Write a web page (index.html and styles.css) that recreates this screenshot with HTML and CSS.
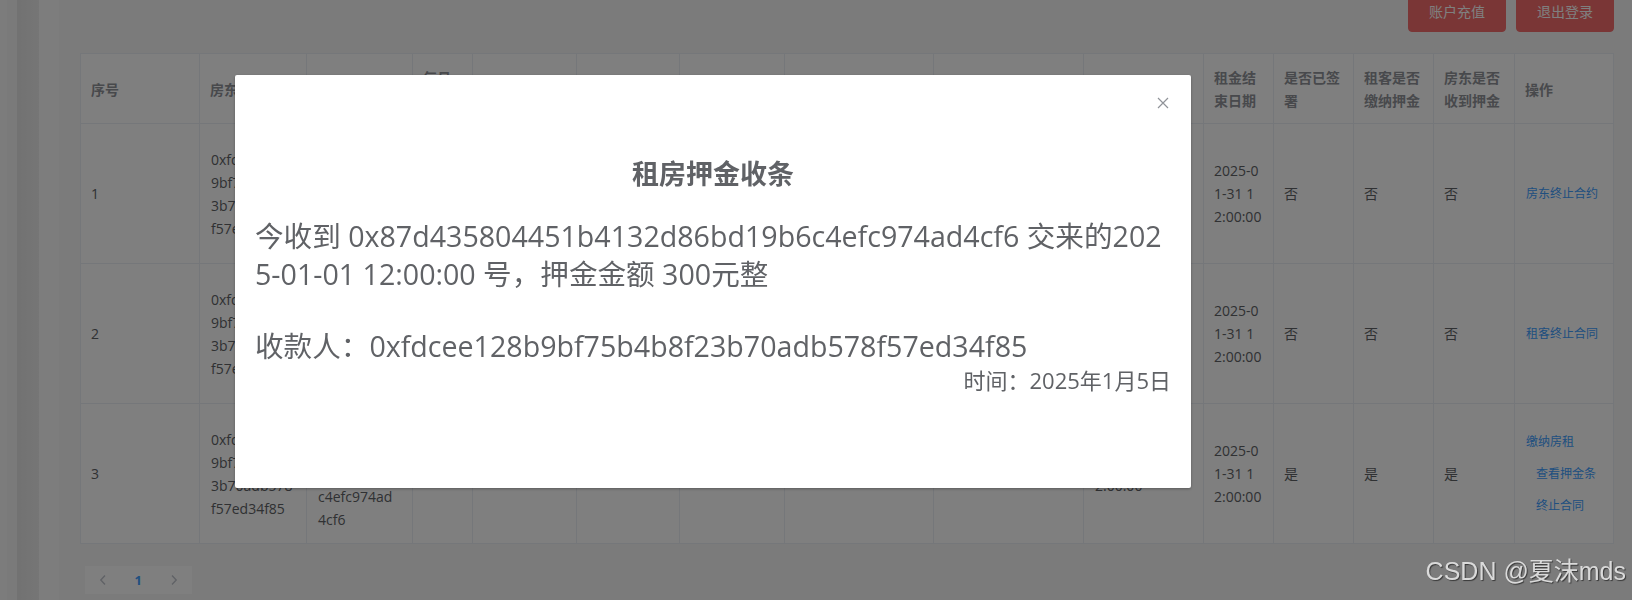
FILE: index.html
```html
<!DOCTYPE html>
<html lang="zh-CN">
<head>
  <meta charset="utf-8">
  <title>租房合约</title>
  <link rel="stylesheet" href="styles.css">
</head>
<body>
<div class="layout">
  <div class="rail">
    <span class="rail-a"></span>
    <span class="rail-b"></span>
    <span class="rail-c"></span>
    <span class="rail-d"></span>
  </div>

  <div class="main">
    <div class="toolbar">
      <button class="btn-danger">账户充值</button>
      <button class="btn-danger">退出登录</button>
    </div>

    <div class="table-wrap">
      <table class="grid">
        <colgroup>
          <col class="w119"><col class="w107"><col class="w106"><col class="w60">
          <col class="w104"><col class="w103"><col class="w105"><col class="w149">
          <col class="w150"><col class="w120"><col class="w70"><col class="w80">
          <col class="w80"><col class="w81"><col class="w99">
        </colgroup>
        <thead>
          <tr>
            <th><div class="cell">序号</div></th>
            <th><div class="cell">房东地址</div></th>
            <th><div class="cell">租客地址</div></th>
            <th><div class="cell">每月租金</div></th>
            <th><div class="cell">房屋名称</div></th>
            <th><div class="cell">房屋地址</div></th>
            <th><div class="cell">押金</div></th>
            <th><div class="cell">房屋描述</div></th>
            <th><div class="cell">签约时间</div></th>
            <th><div class="cell">租金开始日期</div></th>
            <th><div class="cell">租金结束日期</div></th>
            <th><div class="cell">是否已签署</div></th>
            <th><div class="cell">租客是否缴纳押金</div></th>
            <th><div class="cell">房东是否收到押金</div></th>
            <th><div class="cell">操作</div></th>
          </tr>
        </thead>
        <tbody>
          <tr>
            <td><div class="cell">1</div></td>
            <td><div class="cell addr">0xfdcee128b9bf75b4b8f23b70adb578f57ed34f85</div></td>
            <td><div class="cell addr tight">0x87d435804451b4132d86bd19b6c4efc974ad4cf6</div></td>
            <td></td><td></td><td></td><td></td><td></td><td></td>
            <td><div class="cell addr">2025-01-01 1<br>2:00:00</div></td>
            <td><div class="cell">2025-0<br>1-31 1<br>2:00:00</div></td>
            <td><div class="cell">否</div></td>
            <td><div class="cell">否</div></td>
            <td><div class="cell">否</div></td>
            <td><div class="cell"><button class="btn-text">房东终止合约</button></div></td>
          </tr>
          <tr>
            <td><div class="cell">2</div></td>
            <td><div class="cell addr">0xfdcee128b9bf75b4b8f23b70adb578f57ed34f85</div></td>
            <td><div class="cell addr tight">0x87d435804451b4132d86bd19b6c4efc974ad4cf6</div></td>
            <td></td><td></td><td></td><td></td><td></td><td></td>
            <td><div class="cell addr">2025-01-01 1<br>2:00:00</div></td>
            <td><div class="cell">2025-0<br>1-31 1<br>2:00:00</div></td>
            <td><div class="cell">否</div></td>
            <td><div class="cell">否</div></td>
            <td><div class="cell">否</div></td>
            <td><div class="cell"><button class="btn-text">租客终止合同</button></div></td>
          </tr>
          <tr>
            <td><div class="cell">3</div></td>
            <td><div class="cell addr">0xfdcee128b9bf75b4b8f23b70adb578f57ed34f85</div></td>
            <td><div class="cell addr tight">0x87d435804451b4132d86bd19b6c4efc974ad4cf6</div></td>
            <td></td><td></td><td></td><td></td><td></td><td></td>
            <td><div class="cell addr">2025-01-01 1<br>2:00:00</div></td>
            <td><div class="cell">2025-0<br>1-31 1<br>2:00:00</div></td>
            <td><div class="cell">是</div></td>
            <td><div class="cell">是</div></td>
            <td><div class="cell">是</div></td>
            <td><div class="cell"><button class="btn-text">缴纳房租</button><button class="btn-text">查看押金条</button><button class="btn-text">终止合同</button></div></td>
          </tr>
        </tbody>
      </table>
    </div>

    <div class="pager">
      <button class="pager-btn">
        <svg width="8" height="12" viewBox="0 0 8 12"><path d="M6 1.5 L1.8 6 L6 10.5" fill="none" stroke="#c0c4cc" stroke-width="1.4"/></svg>
      </button>
      <span class="pager-num">1</span>
      <button class="pager-btn">
        <svg width="8" height="12" viewBox="0 0 8 12"><path d="M2 1.5 L6.2 6 L2 10.5" fill="none" stroke="#c0c4cc" stroke-width="1.4"/></svg>
      </button>
    </div>
  </div>
</div>

<div class="mask"></div>

<div class="dialog">
  <div class="dialog-header">
    <button class="dialog-close">
      <svg width="16" height="16" viewBox="0 0 16 16"><path d="M3 3 L13 13 M13 3 L3 13" stroke="#909399" stroke-width="1.2"/></svg>
    </button>
  </div>
  <div class="dialog-body">
    <h3 class="receipt-title">租房押金收条</h3>
    <p class="receipt-text">今收到 0x87d435804451b4132d86bd19b6c4efc974ad4cf6 交来的2025-01-01 12:00:00 号，押金金额 300元整</p>
    <p class="receipt-text payee">收款人：0xfdcee128b9bf75b4b8f23b70adb578f57ed34f85</p>
    <p class="receipt-time">时间：2025年1月5日</p>
  </div>
</div>

<div class="watermark">CSDN @夏沫mds</div>
</body>
</html>
```

FILE: styles.css
```css
body{
  margin:0;
  background:#f6f6f6;
  font-family:"Open Sans","Noto Sans CJK SC",sans-serif;
  font-size:14px;
  color:#606266;
  overflow:hidden;
}

.layout{
  display:flex;
  height:600px;
}

.rail{
  display:flex;
  width:59px;
  flex:none;
}

.rail-a{ width:7px; background:#f9f9f9; }
.rail-b{ width:10px; background:#f4f4f4; }
.rail-c{ width:22px; background:linear-gradient(90deg,#e4e4e4,#ececec); }
.rail-d{ width:20px; background:#fafafa; }

.main{
  flex:1;
  padding:0 18px 0 21px;
}

.toolbar{
  display:flex;
  justify-content:flex-end;
  align-items:flex-start;
  gap:10px;
  height:61px;
  margin-top:-8px;
}

.btn-danger{
  font-family:"Open Sans","Noto Sans CJK SC",sans-serif;
  font-size:14px;
  line-height:1;
  padding:12px 20px;
  border:1px solid #f56c6c;
  background:#f56c6c;
  color:#fff;
  border-radius:4px;
}

.table-wrap{
  width:1533px;
  border-top:1px solid #ebeef5;
  border-left:1px solid #ebeef5;
  background:#fff;
}

.grid{
  width:1533px;
  table-layout:fixed;
  border-spacing:0;
}

.w119{ width:119px; }
.w107{ width:107px; }
.w106{ width:106px; }
.w60{ width:60px; }
.w104{ width:104px; }
.w103{ width:103px; }
.w105{ width:105px; }
.w149{ width:149px; }
.w150{ width:150px; }
.w120{ width:120px; }
.w70{ width:70px; }
.w80{ width:80px; }
.w81{ width:81px; }
.w99{ width:99px; }

.grid th,
.grid td{
  padding:12px 0;
  border-right:1px solid #ebeef5;
  border-bottom:1px solid #ebeef5;
  text-align:left;
  vertical-align:middle;
  font-weight:normal;
}

.grid th{
  padding:12px 0 11px;
  color:#909399;
  font-weight:bold;
}

.cell{
  padding:0 10px;
  line-height:23px;
  word-break:break-all;
}

.cell.addr{
  padding:0 11px;
}

.cell.tight{
  padding-right:13.5px;
}

.btn-text{
  font-family:"Open Sans","Noto Sans CJK SC",sans-serif;
  font-size:12px;
  line-height:12px;
  padding:9px 0;
  border:1px solid transparent;
  background:none;
  color:#409eff;
  vertical-align:middle;
}

.btn-text + .btn-text{
  margin-left:10px;
}

.pager{
  display:flex;
  margin-top:20px;
  padding:2px 5px;
}

.pager-btn,
.pager-num{
  display:flex;
  align-items:center;
  justify-content:center;
  min-width:35.5px;
  height:28px;
  padding:0;
  border:0;
  background:#fff;
}

.pager-num{
  font-size:13px;
  font-weight:bold;
  color:#409eff;
}

.mask{
  position:fixed;
  inset:0;
  background:rgba(0,0,0,.5);
}

.dialog{
  position:fixed;
  left:235px;
  top:75px;
  width:956px;
  height:413px;
  background:#fff;
  border-radius:2px;
  box-shadow:0 1px 3px rgba(0,0,0,.3);
}

.dialog-header{
  display:flex;
  justify-content:flex-end;
  align-items:flex-start;
  height:24px;
  padding:20px 20px 10px;
}

.dialog-close{
  width:16px;
  height:16px;
  padding:0;
  border:0;
  background:none;
}

.dialog-close svg{
  display:block;
}

.dialog-body{
  padding:30px 20px;
  color:#606266;
}

.receipt-title{
  margin:0;
  font-size:27px;
  line-height:30px;
  font-weight:bold;
  text-align:center;
}

.receipt-text{
  margin:28px 0 0;
  font-size:28.6px;
  line-height:38px;
  word-break:break-all;
}

.receipt-text.payee{
  margin-top:34px;
}

.receipt-time{
  margin:0;
  font-size:22px;
  line-height:30px;
  text-align:right;
}

.watermark{
  position:fixed;
  right:6px;
  top:556px;
  font-family:"Liberation Sans","Noto Sans CJK SC",sans-serif;
  font-size:25px;
  line-height:30px;
  color:#dadada;
  text-shadow:1px 1px 1px rgba(0,0,0,.55);
}
```
